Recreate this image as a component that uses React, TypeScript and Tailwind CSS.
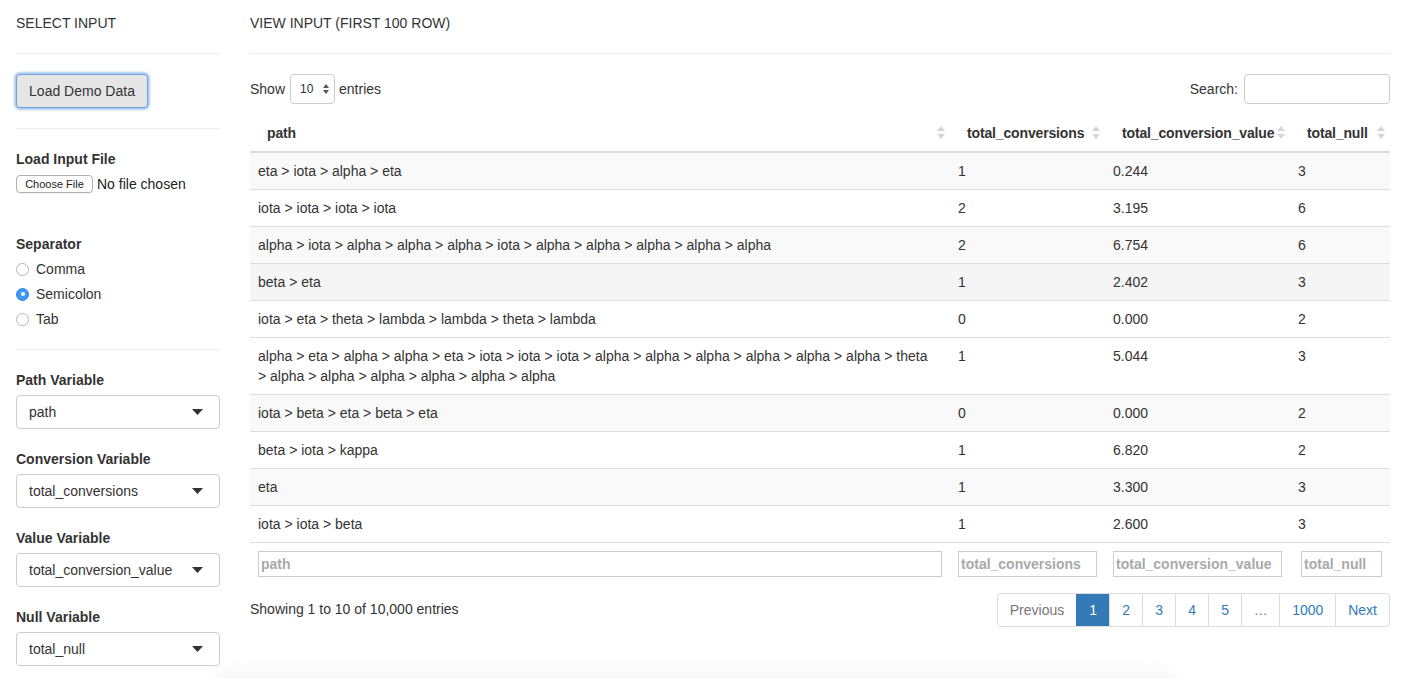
import React from "react";

const rows: { path: string; tc: string; tcv: string; tn: string; bg: string }[] = [
  { path: "eta > iota > alpha > eta", tc: "1", tcv: "0.244", tn: "3", bg: "bg-[#f9f9f9]" },
  { path: "iota > iota > iota > iota", tc: "2", tcv: "3.195", tn: "6", bg: "bg-white" },
  { path: "alpha > iota > alpha > alpha > alpha > iota > alpha > alpha > alpha > alpha > alpha", tc: "2", tcv: "6.754", tn: "6", bg: "bg-[#f9f9f9]" },
  { path: "beta > eta", tc: "1", tcv: "2.402", tn: "3", bg: "bg-[#f5f5f5]" },
  { path: "iota > eta > theta > lambda > lambda > theta > lambda", tc: "0", tcv: "0.000", tn: "2", bg: "bg-white" },
  { path: "alpha > eta > alpha > alpha > eta > iota > iota > iota > alpha > alpha > alpha > alpha > alpha > alpha > theta > alpha > alpha > alpha > alpha > alpha > alpha", tc: "1", tcv: "5.044", tn: "3", bg: "bg-white" },
  { path: "iota > beta > eta > beta > eta", tc: "0", tcv: "0.000", tn: "2", bg: "bg-[#f9f9f9]" },
  { path: "beta > iota > kappa", tc: "1", tcv: "6.820", tn: "2", bg: "bg-white" },
  { path: "eta", tc: "1", tcv: "3.300", tn: "3", bg: "bg-[#f9f9f9]" },
  { path: "iota > iota > beta", tc: "1", tcv: "2.600", tn: "3", bg: "bg-white" },
];

function SortIcon() {
  return (
    <svg width="8" height="14" viewBox="0 0 8 14" className="shrink-0">
      <polygon points="4,0 8,5 0,5" fill="#d6d6d6" />
      <polygon points="0,8 8,8 4,13" fill="#d6d6d6" />
    </svg>
  );
}

function Caret() {
  return (
    <svg width="11" height="6" viewBox="0 0 11 6">
      <polygon points="0,0 11,0 5.5,6" fill="#333" />
    </svg>
  );
}

function SelectBox({ label, value }: { label: string; value: string }) {
  return (
    <div className="mt-[20px]">
      <div className="font-bold leading-[20px]">{label}</div>
      <div className="mt-[5px] h-[34px] border border-[#cccccc] rounded-[4px] bg-white flex items-center justify-between pl-[12px] pr-[16px]">
        <span>{value}</span>
        <Caret />
      </div>
    </div>
  );
}

function Radio({ label, checked }: { label: string; checked?: boolean }) {
  return (
    <div className="flex items-center h-[20px] mt-[5px]">
      {checked ? (
        <span className="w-[13px] h-[13px] rounded-full bg-[#3b99fc] border border-[#2f86e6] flex items-center justify-center">
          <span className="w-[4px] h-[4px] rounded-full bg-white" />
        </span>
      ) : (
        <span className="w-[13px] h-[13px] rounded-full bg-white border border-[#b5b5b5]" />
      )}
      <span className="ml-[7px]">{label}</span>
    </div>
  );
}

export default function App() {
  return (
    <div
      className="w-[1409px] min-h-[678px] bg-white text-[#333333] text-[14px] leading-[20px] overflow-hidden"
      style={{ fontFamily: '"Liberation Sans", Arial, sans-serif' }}
    >
      <div className="flex px-[16px]">
        {/* Sidebar */}
        <div className="w-[204px] shrink-0 pt-[13px]">
          <div className="leading-[20px]">SELECT INPUT</div>
          <div className="mt-[20px] border-t border-[#eeeeee]" />
          <button className="mt-[20px] h-[34px] w-[132px] rounded-[4px] bg-[#e6e6e6] border border-[#6a9fd8] shadow-[0_0_2px_2px_rgba(100,160,230,0.55)] text-[14px] text-[#333]">
            Load Demo Data
          </button>
          <div className="mt-[20px] border-t border-[#eeeeee]" />
          <div className="mt-[20px] font-bold leading-[20px]">Load Input File</div>
          <div className="mt-[5px] flex items-center h-[20px]">
            <span className="h-[18px] w-[77px] flex items-center justify-center rounded-[4px] border border-[#b0b0b0] bg-white text-[11px] text-[#222] shadow-[0_1px_0_rgba(0,0,0,0.05)]">
              Choose File
            </span>
            <span className="ml-[4px] text-[14px] text-[#222]">No file chosen</span>
          </div>
          <div className="mt-[40px] font-bold leading-[20px]">Separator</div>
          <div>
            <Radio label="Comma" />
            <Radio label="Semicolon" checked />
            <Radio label="Tab" />
          </div>
          <div className="mt-[20px] border-t border-[#eeeeee]" />
          <SelectBox label="Path Variable" value="path" />
          <SelectBox label="Conversion Variable" value="total_conversions" />
          <SelectBox label="Value Variable" value="total_conversion_value" />
          <SelectBox label="Null Variable" value="total_null" />
        </div>

        {/* Main */}
        <div className="w-[1140px] shrink-0 ml-[30px] pt-[13px]">
          <div className="leading-[20px]">VIEW INPUT (FIRST 100 ROW)</div>
          <div className="mt-[20px] border-t border-[#eeeeee]" />

          <div className="mt-[20px] flex items-center justify-between h-[30px]">
            <div className="flex items-center">
              <span>Show</span>
              <span className="ml-[5px] h-[30px] w-[45px] border border-[#cccccc] rounded-[4px] flex items-center justify-between pl-[9px] pr-[5px] text-[12px]">
                <span>10</span>
                <svg width="6" height="10" viewBox="0 0 6 10">
                  <polygon points="3,0 6,4 0,4" fill="#555" />
                  <polygon points="0,6 6,6 3,10" fill="#555" />
                </svg>
              </span>
              <span className="ml-[4px]">entries</span>
            </div>
            <div className="flex items-center">
              <span>Search:</span>
              <span className="ml-[6px] h-[30px] w-[146px] border border-[#cccccc] rounded-[4px] bg-white" />
            </div>
          </div>

          <table className="mt-[11px] mb-[6px] w-[1140px] table-fixed border-collapse">
            <colgroup>
              <col className="w-[700px]" />
              <col className="w-[155px]" />
              <col className="w-[185px]" />
              <col className="w-[100px]" />
            </colgroup>
            <thead>
              <tr className="border-b-2 border-[#dddddd]">
                {["path", "total_conversions", "total_conversion_value", "total_null"].map((h) => (
                  <th key={h} className="pl-[17px] pr-[5px] py-[8px] text-left font-bold">
                    <div className="flex items-center justify-between">
                      <span className="tracking-[-0.15px] whitespace-nowrap">{h}</span>
                      <SortIcon />
                    </div>
                  </th>
                ))}
              </tr>
            </thead>
            <tbody>
              {rows.map((r, i) => (
                <tr key={i} className={`${r.bg} border-t border-[#dddddd]`}>
                  <td className="pl-[8px] pr-[14px] py-[8px] align-top">{r.path}</td>
                  <td className="px-[8px] py-[8px] align-top">{r.tc}</td>
                  <td className="px-[8px] py-[8px] align-top">{r.tcv}</td>
                  <td className="px-[8px] py-[8px] align-top">{r.tn}</td>
                </tr>
              ))}
            </tbody>
            <tfoot>
              <tr className="border-t border-[#dddddd]">
                {["path", "total_conversions", "total_conversion_value", "total_null"].map((h, i) => (
                  <th key={h} className={`py-[8px] ${i === 3 ? "pl-[11px] pr-[8px]" : "px-[8px]"} font-bold text-left`}>
                    <input
                      placeholder={h}
                      className="w-full h-[26px] border border-[#cccccc] px-[2px] font-bold text-[14px] placeholder:text-[#a9a9a9] outline-none"
                    />
                  </th>
                ))}
              </tr>
            </tfoot>
          </table>

          <div className="flex justify-between">
            <div className="pt-[8px]">Showing 1 to 10 of 10,000 entries</div>
            <div className="mt-[2px] flex h-[34px] border border-[#dddddd] rounded-[4px] overflow-hidden">
              <span className="px-[12px] flex items-center text-[#777777]">Previous</span>
              <span className="w-[33px] flex items-center justify-center bg-[#337ab7] text-white border-l border-[#337ab7]">1</span>
              {["2", "3", "4", "5"].map((n) => (
                <span key={n} className="w-[33px] flex items-center justify-center text-[#337ab7] border-l border-[#dddddd]">
                  {n}
                </span>
              ))}
              <span className="w-[38px] flex items-center justify-center text-[#777777] border-l border-[#dddddd]">…</span>
              <span className="w-[56px] flex items-center justify-center text-[#337ab7] border-l border-[#dddddd]">1000</span>
              <span className="px-[12px] flex items-center text-[#337ab7] border-l border-[#dddddd]">Next</span>
            </div>
          </div>
        </div>
      </div>
      <div className="mt-[6px] ml-[215px] w-[960px] h-[30px] rounded-[20px] bg-[#f4f4f4] blur-[8px]" />
    </div>
  );
}
